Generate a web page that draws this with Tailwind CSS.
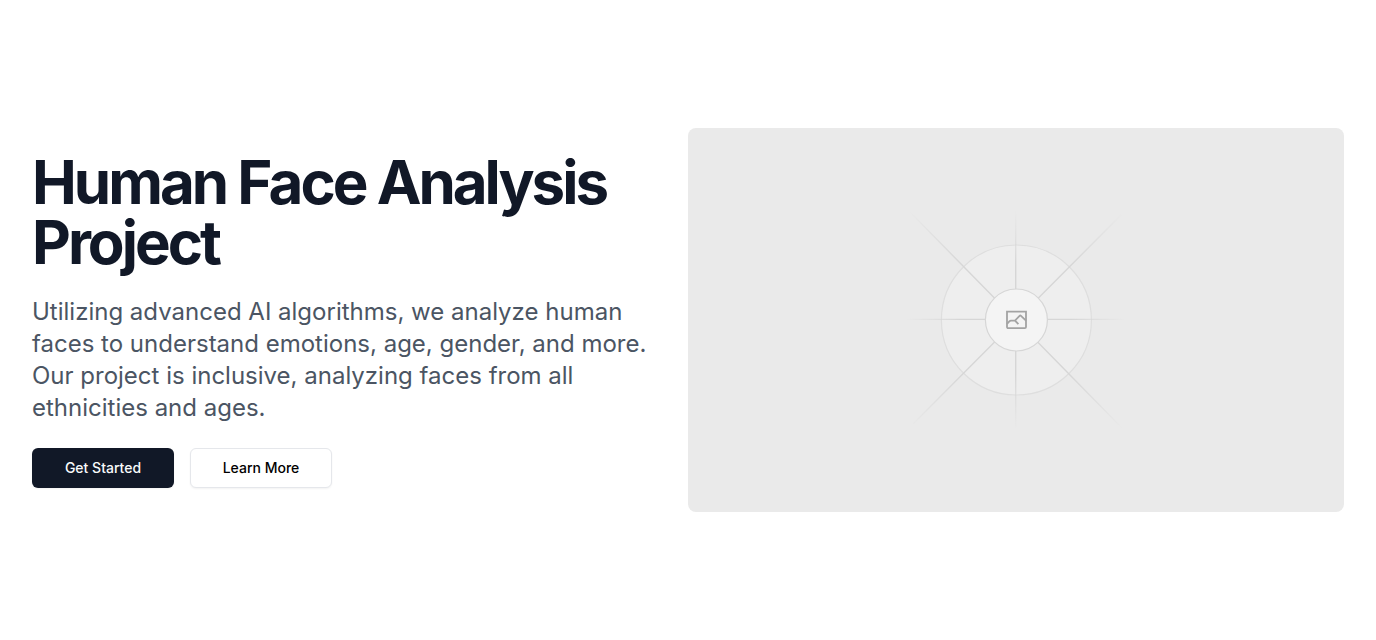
<!DOCTYPE html>
<html lang="en">
<head>
<meta charset="utf-8">
<meta name="viewport" content="width=device-width, initial-scale=1">
<title>Human Face Analysis Project</title>
<script src="https://cdn.jsdelivr.net/npm/@tailwindcss/browser@4"></script>
</head>
<body class="bg-white font-['Inter',sans-serif] text-[#020817]">
<main class="grid min-h-screen grid-cols-2 items-center px-8">
  <section class="flex flex-col gap-6 pr-6">
    <h1 class="text-6xl leading-none font-bold tracking-tighter text-[#111827]">Human Face Analysis Project</h1>
    <p class="text-2xl leading-8 text-[#4b5563]">Utilizing advanced AI algorithms, we analyze human faces to understand emotions, age, gender, and more. Our project is inclusive, analyzing faces from all ethnicities and ages.</p>
    <div class="flex gap-4">
      <a href="#start" class="inline-flex h-10 w-[142px] items-center justify-center rounded-md bg-[#111827] text-sm font-medium text-gray-50 shadow-xs">Get Started</a>
      <a href="#more" class="inline-flex h-10 w-[142px] items-center justify-center rounded-md border border-gray-200 bg-white text-sm font-medium text-black shadow-xs">Learn More</a>
    </div>
  </section>
  <div class="flex h-96 items-center justify-center overflow-hidden rounded-lg bg-[#eaeaea]">
    <svg class="size-60" viewBox="0 0 240 240" fill="none" role="img" aria-label="Image placeholder">
      <defs>
        <radialGradient id="fade" gradientUnits="userSpaceOnUse" cx="120" cy="120" r="152">
          <stop offset=".5" stop-color="#d6d6d6"/><stop offset="1" stop-color="#d6d6d6" stop-opacity="0"/>
        </radialGradient>
        <radialGradient id="fadeAxis" gradientUnits="userSpaceOnUse" cx="120" cy="120" r="110">
          <stop offset=".5" stop-color="#d6d6d6"/><stop offset="1" stop-color="#d6d6d6" stop-opacity="0"/>
        </radialGradient>
      </defs>
      <circle cx="120.400" cy="120" r="75" fill="#eeeeee" stroke="#dedede" stroke-width="1.200"/>
      <path d="M119.700 10v220M10 119.400h220" stroke="url(#fadeAxis)" stroke-width="1.400"/>
      <path d="M14 12l212 216M17 224L226 14" stroke="url(#fade)" stroke-width="1.400"/>
      <circle cx="120.400" cy="120" r="31" fill="#f4f4f4" stroke="#d6d6d6" stroke-width="1.200"/>
      <g transform="translate(108 108)" stroke="#a3a3a3" stroke-width="1.800">
        <path d="M3 3.700h19v15.300a1.200 1.200 0 0 1-1.200 1.200H4.200A1.200 1.200 0 0 1 3 19z"/>
        <path d="M3 16l2.300-2.700Q6 12.600 7 12.600h4l4.600-4.800q.7-.7 1.400 0l5 4.900M11 12.600l3.400 3.500"/>
      </g>
    </svg>
  </div>
</main>
</body>
</html>
